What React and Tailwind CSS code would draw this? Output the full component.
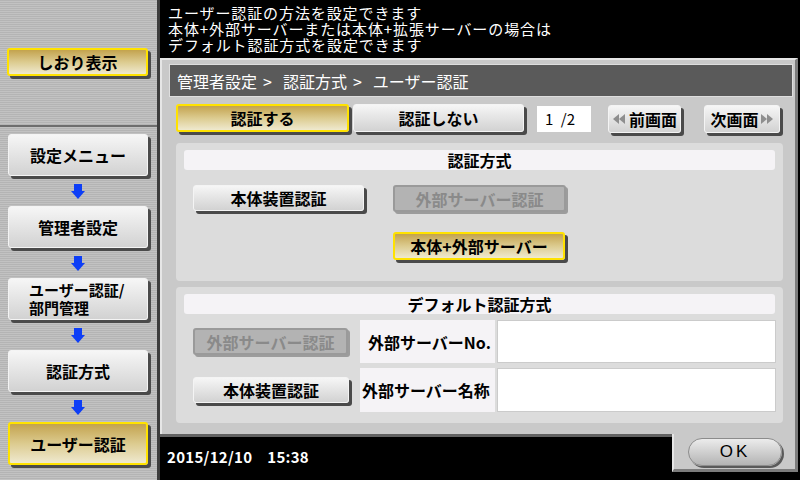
import React from "react";

const stripes =
  "bg-[image:repeating-linear-gradient(to_bottom,#b4b4b4_0px,#b4b4b4_1px,#c2c2c2_1px,#c2c2c2_2px)]";

const normalSkin =
  "border border-[#f4f4f4] bg-linear-to-b from-[#f6f6f6] to-[#d2d2d2] shadow-[3px_3px_0_#4a4a4a]";
const yellowSkin =
  "border-2 border-[#ffe200] bg-linear-to-b from-[#c3a34d] via-[#dccb8f] to-[#efe9cf] shadow-[3px_3px_0_#4a4a4a]";
const disabledSkin =
  "border-2 border-[#9a9a9a] bg-[#b3b3b3] text-[#8a8a8a] shadow-[2px_2px_0_#9c9c9c]";

function Arrow() {
  return (
    <svg width="14" height="15" viewBox="0 0 14 15">
      <path d="M3 0H11V7H14L7 15L0 7H3Z" fill="#0d3ef6" />
    </svg>
  );
}

function SideBtn({ children, yellow }) {
  return (
    <div
      className={`w-[140px] h-[42px] rounded-[3px] flex items-center justify-center text-[16px] font-bold text-black leading-[18px] ${
        yellow ? yellowSkin : normalSkin
      }`}
    >
      {children}
    </div>
  );
}

function SideArrow() {
  return (
    <div className="w-[140px] h-[30px] flex items-center justify-center">
      <Arrow />
    </div>
  );
}

function Btn({ children, skin = "normal", className = "" }) {
  const s = skin === "yellow" ? yellowSkin : skin === "disabled" ? disabledSkin : normalSkin;
  return (
    <div
      className={`rounded-[3px] flex items-center justify-center text-[16px] font-bold leading-none ${
        skin === "disabled" ? "" : "text-black"
      } ${s} ${className}`}
    >
      {children}
    </div>
  );
}

function DoubleLeft() {
  return (
    <svg width="14" height="10" viewBox="0 0 14 10" className="mr-[3px]">
      <path d="M7 0L1 5L7 10Z" fill="#8e8e8e" />
      <path d="M13 0L7 5L13 10Z" fill="#8e8e8e" />
    </svg>
  );
}

function DoubleRight() {
  return (
    <svg width="14" height="10" viewBox="0 0 14 10" className="ml-[1px]">
      <path d="M1 0L7 5L1 10Z" fill="#8e8e8e" />
      <path d="M7 0L13 5L7 10Z" fill="#8e8e8e" />
    </svg>
  );
}

export default function App() {
  return (
    <div className="w-[800px] h-[480px] flex bg-black overflow-hidden font-['Noto_Sans_CJK_JP',sans-serif]">
      {/* Sidebar */}
      <aside className={`w-[160px] h-[480px] flex flex-col border-r-[3px] border-[#3c3c3c] ${stripes}`}>
        <div className="h-[127px] border-b-2 border-[#6e6e6e] pt-[48px] pl-[7px]">
          <div
            className={`w-[141px] h-[28px] rounded-[3px] flex items-center justify-center text-[16px] font-bold text-black ${yellowSkin}`}
          >
            しおり表示
          </div>
        </div>
        <div className="flex flex-col pt-[7px] pl-[8px]">
          <SideBtn>設定メニュー</SideBtn>
          <SideArrow />
          <SideBtn>管理者設定</SideBtn>
          <SideArrow />
          <div
            className={`w-[140px] h-[42px] rounded-[3px] flex flex-col justify-center pl-[20px] text-[15px] font-bold text-black leading-[18px] ${normalSkin}`}
          >
            <span>ユーザー認証/</span>
            <span>部門管理</span>
          </div>
          <SideArrow />
          <SideBtn>認証方式</SideBtn>
          <SideArrow />
          <div className="h-[43px]">
            <div
              className={`w-[140px] h-[43px] rounded-[3px] flex items-center justify-center text-[16px] font-bold text-black ${yellowSkin}`}
            >
              ユーザー認証
            </div>
          </div>
        </div>
      </aside>

      {/* Main */}
      <main className="w-[640px] h-[480px] flex flex-col">
        <div className="h-[58px] pl-[8px] pt-[5px] text-white text-[15px] leading-[16px] tracking-[0.9px]">
          <div>ユーザー認証の方法を設定できます</div>
          <div>本体+外部サーバーまたは本体+拡張サーバーの場合は</div>
          <div>デフォルト認証方式を設定できます</div>
        </div>

        <div className="w-[638px] h-[376px] bg-[#c9c9c9] border-l-2 border-t-2 border-[#e6e6e6] border-r-[3px] border-r-[#7c7c7c]">
          {/* breadcrumb */}
          <div className="ml-[7px] mt-[4px] w-[624px] h-[33px] bg-[#5a5a5a] border border-[#dedede] flex items-center pl-[7px] text-white text-[16px]">
            <span>管理者設定</span>
            <span className="ml-[6px] mr-[11px]">&gt;</span>
            <span>認証方式</span>
            <span className="ml-[6px] mr-[11px]">&gt;</span>
            <span>ユーザー認証</span>
          </div>

          {/* tab row */}
          <div className="ml-[14px] mt-[7px] h-[31px] flex items-start">
            <Btn skin="yellow" className="w-[173px] h-[28px]">認証する</Btn>
            <Btn className="w-[171px] h-[28px] ml-[4px]">認証しない</Btn>
            <div className="ml-[13px] mt-[2px] w-[54px] h-[26px] bg-white flex items-center pl-[8px] text-[15px] text-black whitespace-pre">
              {"1\u2002/2"}
            </div>
            <Btn className="ml-[17px] w-[73px] h-[28px] mt-[1px]">
              <DoubleLeft />
              前画面
            </Btn>
            <Btn className="ml-[23px] w-[76px] h-[28px] mt-[1px]">
              次画面
              <DoubleRight />
            </Btn>
          </div>

          {/* section 1 */}
          <div className="ml-[14px] mt-[8px] w-[607px] h-[138px] bg-[#dcdcdc] rounded-[4px] pt-[7px]">
            <div className="mx-[8px] h-[20px] bg-[#f5f3f6] rounded-[3px] flex items-center justify-center text-[16px] font-bold text-black">
              認証方式
            </div>
            <div className="flex mt-[15px] pl-[17px]">
              <Btn className="w-[171px] h-[26px]">本体装置認証</Btn>
              <Btn skin="disabled" className="w-[173px] h-[27px] ml-[29px]">外部サーバー認証</Btn>
            </div>
            <div className="flex mt-[20px] pl-[217px]">
              <Btn skin="yellow" className="w-[172px] h-[28px]">本体+外部サーバー</Btn>
            </div>
          </div>

          {/* section 2 */}
          <div className="ml-[14px] mt-[6px] w-[607px] h-[136px] bg-[#dcdcdc] rounded-[4px] pt-[7px]">
            <div className="mx-[8px] h-[20px] bg-[#f5f3f6] rounded-[3px] flex items-center justify-center text-[16px] font-bold text-black">
              デフォルト認証方式
            </div>
            <div className="flex mt-[6px] pl-[17px] h-[43px]">
              <div className="w-[167px] flex items-center">
                <Btn skin="disabled" className="w-[155px] h-[27px]">外部サーバー認証</Btn>
              </div>
              <div className="w-[135px] bg-[#f5f3f6] flex items-center pl-[8px] text-[16px] font-bold text-black">
                外部サーバーNo.
              </div>
              <div className="w-[279px] ml-[2px] bg-white border border-[#cbcbcb]" />
            </div>
            <div className="flex mt-[5px] pl-[17px] h-[44px]">
              <div className="w-[167px] flex items-center">
                <Btn className="w-[156px] h-[26px]">本体装置認証</Btn>
              </div>
              <div className="w-[135px] bg-[#f5f3f6] flex items-center pl-[2px] text-[16px] font-bold text-black">
                外部サーバー名称
              </div>
              <div className="w-[279px] ml-[2px] bg-white border border-[#cbcbcb]" />
            </div>
          </div>
        </div>

        {/* bottom row */}
        <div className="flex h-[46px]">
          <div className="w-[512px] border-t-[3px] border-[#626262] pl-[7px] pt-[9px] text-white text-[15px] font-bold whitespace-pre tracking-[0.3px]">
            {"2015/12/10    15:38"}
          </div>
          <div className="w-[126px] h-[38px] bg-[#c9c9c9] border-l-2 border-[#e6e6e6] border-r-[3px] border-r-[#7c7c7c] border-b-[3px] border-b-[#7c7c7c] pl-[14px] pt-[4px]">
            <div className="w-[94px] h-[28px] rounded-full border border-[#8c8c8c] bg-linear-to-b from-[#ececec] to-[#b4b4b4] shadow-[2px_2px_0_#5a5a5a] flex items-center justify-center text-[17px] text-black font-['Liberation_Sans',sans-serif] tracking-[3px]">
              OK
            </div>
          </div>
        </div>
      </main>
    </div>
  );
}
